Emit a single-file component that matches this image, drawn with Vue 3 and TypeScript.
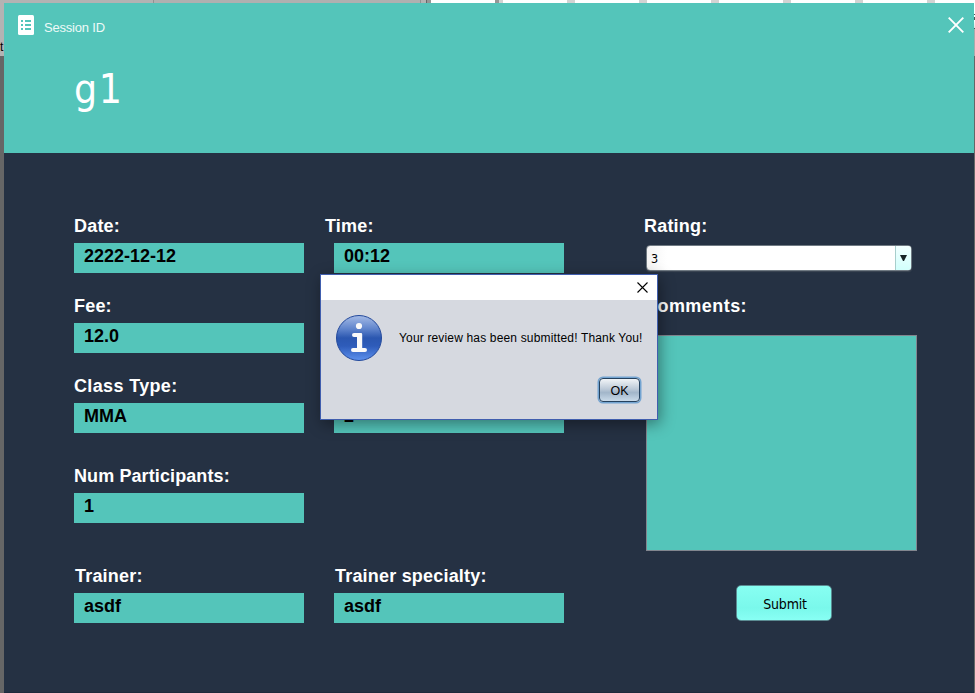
<script setup lang="ts">
import { ref } from 'vue'

interface Field {
  label: string
  value: string
  kind?: string
}

const left: Field[] = [
  { label: 'Date:', value: '2222-12-12' },
  { label: 'Fee:', value: '12.0' },
  { label: 'Class Type:', value: 'MMA', kind: 'loose' },
  { label: 'Num Participants:', value: '1', kind: 'gap-small' },
  { label: 'Trainer:', value: 'asdf', kind: 'gap-large' },
]
const middle: Field[] = [
  { label: 'Time:', value: '00:12', kind: 'outdent' },
  { label: '', value: '', kind: 'blank' },
  { label: '', value: '2' },
  { label: 'Trainer specialty:', value: 'asdf', kind: 'gap-section' },
]
const tabs = [0, 1, 2, 3, 4, 5, 6, 7]
const rating = ref('3')
const comments = ref('')
</script>

<template>
  <div class="desktop">
    <div class="strip">
      <span class="strip-a"></span><span class="strip-b"></span><span class="strip-c"></span>
      <span v-for="t in tabs" :key="t" class="tab" :class="{ first: t === 0 }"></span>
    </div>
    <div class="edge edge-left"><span>t</span></div>
    <div class="edge edge-right"></div>
    <main class="window">
      <header>
        <div class="bar">
          <svg class="list-icon" width="16" height="20" viewBox="0 0 16 20">
            <rect width="16" height="20" rx="1.5" fill="#fff" />
            <path d="M3 5h2v2H3zM7 5h6v2H7zM3 9h2v2H3zM7 9h6v2H7zM3 13h2v2H3zM7 13h6v2H7z" fill="#54c5ba" />
          </svg>
          <span class="session">Session ID</span>
          <svg class="close" width="16" height="16" viewBox="0 0 16 16">
            <path d="M.7.7l14.6 14.6M15.3.7L.7 15.3" stroke="#fff" stroke-width="1.9" fill="none" />
          </svg>
        </div>
        <h1>g1</h1>
      </header>
      <div class="content">
        <section class="column">
          <div v-for="f in left" :key="f.label" class="field" :class="f.kind">
            <label>{{ f.label }}</label>
            <div class="value">{{ f.value }}</div>
          </div>
        </section>
        <section class="column second">
          <div v-for="(f, i) in middle" :key="i" class="field" :class="f.kind">
            <label>{{ f.label }}</label>
            <div class="value">{{ f.value }}</div>
          </div>
        </section>
        <section class="column review">
          <label>Rating:</label>
          <div class="select">
            <span>{{ rating }}</span>
            <div class="arrow">
              <svg width="7" height="6" viewBox="0 0 7 6"><path d="M0 0h7L4 6H3z" fill="#182326" /></svg>
            </div>
          </div>
          <label class="comments-label">Comments:</label>
          <div class="comments">{{ comments }}</div>
          <button class="submit">Submit</button>
        </section>
      </div>
    </main>
    <div class="dialog">
      <div class="titlebar">
        <svg width="11" height="11" viewBox="0 0 11 11">
          <path d="M.5.5l10 10M10.5.5l-10 10" stroke="#000" stroke-width="1.1" fill="none" />
        </svg>
      </div>
      <div class="message">
        <svg width="46" height="46" viewBox="0 0 46 46">
          <defs>
            <linearGradient id="ball" x1="0" y1="0" x2="0" y2="1">
              <stop offset="0" stop-color="#a5bbe6" />
              <stop offset=".3" stop-color="#5f84cc" />
              <stop offset=".5" stop-color="#2b57b0" />
              <stop offset=".68" stop-color="#2e5cba" />
              <stop offset="1" stop-color="#5d91ee" />
            </linearGradient>
          </defs>
          <circle cx="23" cy="23" r="22.5" fill="url(#ball)" stroke="#23499b" />
          <circle cx="23" cy="11" r="3.1" fill="#fafafa" />
          <path d="M18 18h7q1.2 0 1.2 1.2V33H29q2 0 2 2t-2 2H17q-2 0-2-2t2-2h4V22h-3q-2 0-2-2t2-2z" fill="#fafafa" />
        </svg>
        <span>Your review has been submitted! Thank You!</span>
      </div>
      <div class="actions"><button class="ok">OK</button></div>
    </div>
  </div>
</template>

<style>
body {
  overflow: hidden;
}
</style>

<style scoped>
* {
  box-sizing: border-box;
}
.desktop {
  position: relative;
  width: 975px;
  height: 693px;
  overflow: hidden;
  background: #666;
  font-family: 'Liberation Sans', Arial, sans-serif;
}
.strip {
  display: flex;
  height: 3px;
  background: #d3d3d3;
}
.strip span {
  flex-shrink: 0;
}
.strip-a {
  width: 154px;
  background: #b3b3b3;
  border-right: 1px solid #929292;
}
.strip-b {
  width: 267px;
  background: #b0b0b0;
  border-right: 1px solid #929292;
}
.strip-c {
  width: 10px;
  background: linear-gradient(90deg, #b3b3b3 5px, #666 5px, #666 6px, #969696 6px);
}
.tab {
  width: 64px;
  margin-right: 8px;
  background: #fff;
}
.tab.first {
  box-shadow: 4px 0 0 #969696;
}
.tab:last-child {
  width: 40px;
  margin-right: 0;
}
.edge {
  position: absolute;
  top: 0;
  height: 56px;
  width: 4px;
  overflow: hidden;
  background: #b3b3b3;
  font-size: 12px;
  line-height: 14px;
}
.edge span {
  display: block;
  padding-top: 40px;
}
.edge-left {
  left: 0;
}
.edge-right {
  right: 0;
  width: 1px;
  background: linear-gradient(#fff 14px, #555 14px, #555 15px, #fff 15px, #fff 17px, #555 17px, #555 20px, #fff 20px, #ddd 28px, #555 28px, #555 29px, #aaa 29px);
}
.window {
  position: absolute;
  left: 4px;
  top: 3px;
  width: 970px;
  height: 690px;
  background: #253143;
  border-bottom: 1px solid #1e2a3c;
}
header {
  height: 150px;
  background: #54c5ba;
  color: #fff;
}
.bar {
  display: flex;
  align-items: flex-start;
  padding: 12px 10px 0 14px;
}
.session {
  margin: 4px 0 0 10px;
  font-size: 13px;
  line-height: 18px;
  flex: 1;
  color: #eefaf8;
  letter-spacing: -0.2px;
}
.close {
  margin-top: 2px;
}
h1 {
  margin: 28px 0 0 70px;
  font: 400 40.5px/48px 'DejaVu Sans Condensed', 'DejaVu Sans', Tahoma, sans-serif;
  letter-spacing: 1.5px;
}
.content {
  display: flex;
  padding: 60px 57px 0 70px;
}
.column {
  width: 230px;
  margin-right: 30px;
}
.review {
  width: 271px;
  margin: 0 0 0 52px;
}
.field {
  height: 80px;
}
label {
  display: block;
  height: 30px;
  font-size: 18px;
  line-height: 26px;
  font-weight: 700;
  color: #fff;
  white-space: nowrap;
  letter-spacing: 0.2px;
}
.value {
  height: 30px;
  padding-left: 10px;
  background: #54c5ba;
  color: #000;
  font-size: 18px;
  font-weight: 700;
  line-height: 26px;
}
.outdent label {
  margin-left: -9px;
}
.loose label {
  letter-spacing: 0.35px;
}
.blank {
  visibility: hidden;
}
.gap-small {
  margin-top: 10px;
}
.gap-small label {
  letter-spacing: 0.1px;
}
.gap-large {
  margin-top: 20px;
}
.gap-large label,
.gap-section label {
  padding-left: 1px;
}
.gap-section {
  margin-top: 110px;
}
.review label {
  margin-left: -2px;
}
.select {
  display: flex;
  width: 266px;
  height: 26px;
  margin-top: 2px;
  border: 1px solid #707a83;
  border-radius: 4px;
  background: linear-gradient(90deg, #f4f4f4, #fff 20px);
  box-shadow: 0 1px 1px #3e4855;
  overflow: hidden;
}
.select span {
  flex: 1;
  padding-left: 4px;
  font: 12.5px/26px 'DejaVu Sans Condensed', 'DejaVu Sans', sans-serif;
}
.arrow {
  width: 16px;
  display: flex;
  justify-content: center;
  align-items: center;
  border-left: 1px solid #a8cecc;
  background: linear-gradient(#f2ffff, #d2fffc);
}
.review .comments-label {
  margin-top: 22px;
  letter-spacing: 0.45px;
}
.comments {
  width: 271px;
  height: 216px;
  margin-top: 12px;
  border: 1px solid #82868f;
  background: #54c5ba;
}
.submit {
  display: block;
  width: 96px;
  height: 36px;
  margin: 34px 0 0 90px;
  padding: 2px 0 0 2px;
  border: 1px solid #5b8b92;
  border-radius: 5px;
  background: linear-gradient(#87fff2, #7af8eb 65%, #88fff4);
  color: #000;
  font: 14px 'DejaVu Sans Condensed', 'DejaVu Sans', sans-serif;
  letter-spacing: -0.2px;
}
.dialog {
  position: absolute;
  left: 320px;
  top: 274px;
  width: 338px;
  height: 146px;
  border: 1px solid #405eae;
  background: #d6d9e0;
  box-shadow: 2px 4px 14px rgba(0, 0, 0, 0.4);
}
.titlebar {
  display: flex;
  justify-content: flex-end;
  height: 25px;
  padding: 7px 9px 0 0;
  background: #fff;
}
.message {
  display: flex;
  align-items: center;
  gap: 17px;
  padding: 15px 0 0 15px;
  font-size: 12px;
  white-space: nowrap;
  letter-spacing: 0.16px;
}
.actions {
  display: flex;
  justify-content: flex-end;
  padding: 17px 17px 0 0;
}
.ok {
  width: 41px;
  height: 24px;
  padding: 1px 0 0;
  border: 1px solid #25425f;
  border-radius: 4px;
  background: linear-gradient(#f1f4f7, #bdcad8 45%, #a2b6ca 62%, #c9dae9);
  box-shadow: 0 0 0 1.5px #73a4d1;
  font: 12.5px 'Liberation Sans', Arial, sans-serif;
  color: #000;
}
</style>
